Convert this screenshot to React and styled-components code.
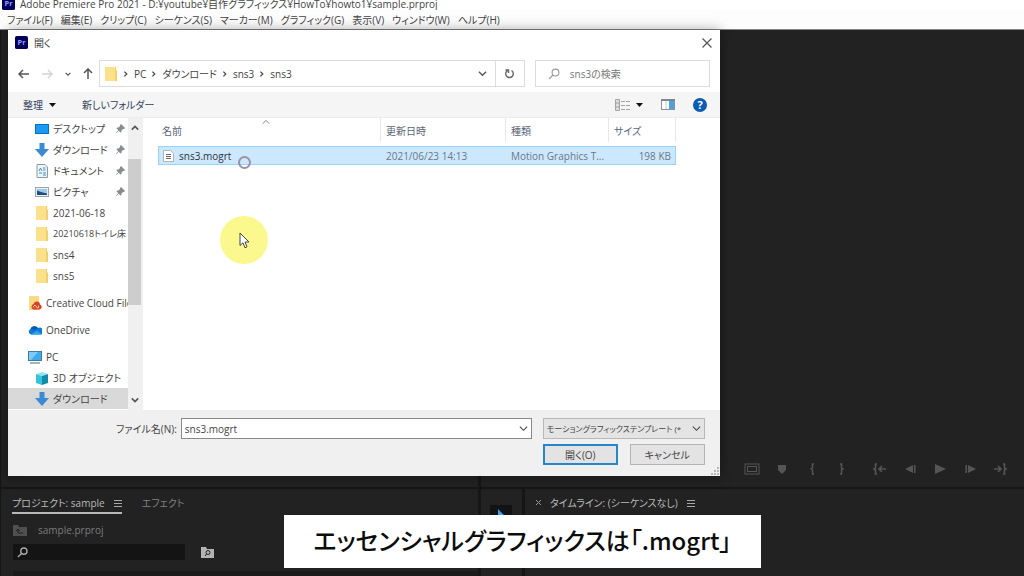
import React, { useState } from 'react'
import styled, { createGlobalStyle } from 'styled-components'

const uiFont = '"Open Sans", "Noto Sans CJK JP", sans-serif'
const panelDark = '#222222'
const seamDark = '#161616'
const dialogGrey = '#f0f0f0'

const GlobalStyle = createGlobalStyle`
  *, *::before, *::after{
    box-sizing: border-box;
  }
  body{
    margin: 0;
    background: ${seamDark};
    font-family: ${uiFont};
    font-size: 10px;
    font-feature-settings: "palt";
    overflow: hidden;
  }
  button, input, select{
    font: inherit;
    font-feature-settings: inherit;
    color: inherit;
    margin: 0;
    padding: 0;
    border: none;
    border-radius: 0;
    background: none;
    outline: none;
  }
  a{
    color: inherit;
    text-decoration: none;
  }
  svg{
    display: block;
    flex: none;
  }
`

const Container = styled.div`
  position: relative;
  display: flex;
  flex-direction: column;
  width: 100%;
  height: 100vh;
  overflow: hidden;
`

const TitleBar = styled.header`
  display: flex;
  align-items: center;
  gap: 5px;
  height: 10px;
  padding: 0 2px 4px;
  background: #fff;
  color: #444;
  white-space: nowrap;
`

const MenuBar = styled.nav`
  display: flex;
  align-items: center;
  gap: 8px;
  height: 20px;
  padding: 0 7px;
  background: #fdfdfd;
  border-bottom: 1px solid #808580;
  color: #444;
  white-space: nowrap;
`

const Workspace = styled.main`
  flex: 1;
  display: grid;
  grid-template-columns: 477px 41px 1fr;
  grid-template-rows: 1fr 87px;
  gap: 2px 3px;
  padding-left: 1px;
  min-height: 0;
`

const Panel = styled.section`
  background: ${panelDark};
  color: #a8a8a8;
  min-width: 0;
  overflow: hidden;
  ${ props => props.$wide && 'grid-column: span 2;' }
`

const MonitorPanel = styled(Panel)`
  display: flex;
  align-items: flex-end;
  justify-content: flex-end;
  gap: 8px;
  padding: 0 9px 8px;
`

const ControlGroup = styled.div`
  display: flex;
`

const ControlButton = styled.button`
  display: grid;
  place-items: center;
  width: 30px;
  height: 20px;
  color: #555;
`

const Tabs = styled.div`
  display: flex;
  align-items: center;
  gap: 20px;
  height: 27px;
  padding: 2px 11px 0;
  white-space: nowrap;
`

const Tab = styled.button`
  display: flex;
  align-items: center;
  gap: 9px;
  height: 21px;
  color: ${ props => props.$active ? '#b8b8b8' : '#808080' };
  border-bottom: 2px solid ${ props => props.$underline ? '#b8b8b8' : 'transparent' };
`

const ProjectPath = styled.div`
  display: flex;
  align-items: center;
  gap: 11px;
  height: 27px;
  padding: 0 12px;
  color: #7c7c7c;
`

const ProjectSearchRow = styled.div`
  display: flex;
  align-items: center;
  gap: 16px;
  height: 18px;
  padding: 0 12px;
`

const ProjectSearch = styled.label`
  display: flex;
  align-items: center;
  gap: 4px;
  width: 172px;
  height: 16px;
  padding: 0 4px;
  background: #141414;
  input{
    flex: 1;
    min-width: 0;
  }
`

const ProjectList = styled.div`
  height: 5px;
  margin: 10px 0 0 12px;
  background: #1a1a1a;
`

const ToolPanel = styled(Panel)`
  padding: 16px 9px;
`

const ToolButton = styled.button`
  display: grid;
  place-items: center;
  width: 22px;
  height: 22px;
  background: #131313;
`

const Dialog = styled.section`
  position: absolute;
  top: 30px;
  left: 8px;
  width: calc(70% - 5px);
  display: flex;
  flex-direction: column;
  background: #fff;
  color: #444;
  box-shadow: 0 0 12px rgba(0,0,0,0.35);
`

const DialogTitle = styled.div`
  display: flex;
  align-items: center;
  gap: 6px;
  height: 25px;
  padding: 0 8px 0 7px;
  h1{
    flex: 1;
    margin: 0;
    font-size: 10px;
    font-weight: 400;
  }
`

const IconButton = styled.button`
  display: grid;
  place-items: center;
  height: 20px;
  color: ${ props => props.$dim ? '#d4d4d4' : '#555' };
`

const NavRow = styled.div`
  display: flex;
  align-items: center;
  height: 37px;
  padding: 0 10px;
`

const NavButtons = styled.div`
  display: flex;
  align-items: center;
  justify-content: space-between;
  width: 76px;
  margin-right: 5px;
`

const AddressBar = styled.div`
  flex: 1;
  display: flex;
  align-items: center;
  height: 27px;
  border: 1px solid #dcdcdc;
`

const Crumbs = styled.div`
  flex: 1;
  display: flex;
  align-items: center;
  gap: 4px;
  padding-left: 4px;
  white-space: nowrap;
`

const Reload = styled.button`
  display: grid;
  place-items: center;
  align-self: stretch;
  width: 29px;
  margin-left: 8px;
  border-left: 1px solid #dcdcdc;
  color: #666;
`

const SearchBox = styled.label`
  display: flex;
  align-items: center;
  gap: 10px;
  width: 175px;
  height: 27px;
  margin-left: 10px;
  padding: 0 12px;
  border: 1px solid #dcdcdc;
  input{
    flex: 1;
    min-width: 0;
  }
  input::placeholder{
    color: #777;
    opacity: 1;
  }
`

const Toolbar = styled.div`
  display: flex;
  align-items: center;
  gap: 26px;
  height: 26px;
  padding: 0 13px 0 15px;
  background: #f5f5f5;
  border-bottom: 1px solid #ececec;
  color: #33415c;
`

const ToolbarItem = styled.button`
  display: flex;
  align-items: center;
  gap: 6px;
`

const ToolbarRight = styled.div`
  display: flex;
  align-items: center;
  gap: 18px;
  margin-left: auto;
`

const DialogBody = styled.div`
  display: flex;
  height: 292px;
`

const Sidebar = styled.nav`
  flex: 1;
  min-width: 0;
  overflow: hidden;
`

const SideGroup = styled.div`
  & + &{
    margin-top: 6px;
  }
`

const SideItem = styled.a`
  display: flex;
  align-items: center;
  gap: 4px;
  height: 21px;
  padding-left: ${ props => props.$nested ? 27 : 20 }px;
  background: ${ props => props.$selected ? '#d9d9d9' : 'transparent' };
  white-space: nowrap;
  font-size: ${ props => props.$small ? 9 : 10 }px;
  span{
    flex: 1;
    min-width: 0;
    overflow: hidden;
  }
`

const SideWrap = styled.div`
  display: flex;
  width: 135px;
`

const ScrollTrack = styled.div`
  display: flex;
  flex-direction: column;
  align-items: stretch;
  width: 15px;
  padding-right: 2px;
  background: ${dialogGrey};
`

const ScrollThumb = styled.div`
  height: 146px;
  margin: 21px 0 auto;
  background: #cdcdcd;
`

const FileArea = styled.div`
  flex: 1;
  padding-left: 15px;
`

const FileTable = styled.table`
  width: 518px;
  table-layout: fixed;
  border-collapse: separate;
  border-spacing: 0;
  th, td{
    padding: 0 5px;
    font-weight: 400;
    text-align: left;
    white-space: nowrap;
  }
  th{
    position: relative;
    height: 24px;
    color: #5a6578;
    border-right: 1px solid #e8e8e8;
  }
  th:first-child, td:first-child{
    padding-left: 4px;
  }
`

const SortMark = styled.span`
  position: absolute;
  top: 0;
  left: 47%;
  color: #777;
`

const FileRow = styled.tr`
  td{
    height: 19px;
    background: #cce8ff;
    border: 1px solid #99d1ff;
    border-width: 1px 0;
    color: #6c7784;
  }
  td:first-child{
    border-left-width: 1px;
    color: #333;
  }
  td:last-child{
    border-right-width: 1px;
    padding-right: 4px;
    text-align: right;
  }
`

const FileName = styled.div`
  display: flex;
  align-items: center;
  gap: 5px;
  line-height: 16px;
`

const Footer = styled.form`
  display: grid;
  grid-template-columns: 1fr 351px 162px;
  gap: 5px 11px;
  align-items: center;
  padding: 8px 15px 11px 0;
  background: ${dialogGrey};
  .fileLabel{
    margin-right: -7px;
    text-align: right;
  }
`

const Combo = styled.div`
  display: flex;
  align-items: center;
  height: 21px;
  padding: 0 3px;
  background: #fff;
  border: 1px solid #8a8a8a;
  input{
    flex: 1;
    min-width: 0;
  }
`

const TypeSelect = styled.div`
  display: flex;
  align-items: center;
  gap: 2px;
  height: 21px;
  padding: 0 3px;
  background: #e4e4e4;
  border: 1px solid #b8b8b8;
  select{
    flex: 1;
    min-width: 0;
    appearance: none;
    font-size: 8px;
  }
`

const Actions = styled.div`
  grid-column: 3;
  display: grid;
  grid-template-columns: 1fr 1fr;
  gap: 12px;
`

const ActionButton = styled.button`
  height: 21px;
  background: #e3e3e3;
  border: ${ props => props.$primary ? '2px solid #2a84c8' : '1px solid #b4b4b4' };
`

const Grip = styled.div`
  position: absolute;
  right: 1px;
  bottom: 1px;
`

const BusyRing = styled.div`
  position: absolute;
  top: 156px;
  left: 238px;
  width: 13px;
  height: 13px;
  border: 2px solid #9a92a4;
  border-radius: 50%;
`

const Pointer = styled.div`
  position: absolute;
  top: 216px;
  left: 220px;
  display: grid;
  place-items: center;
  width: 48px;
  height: 48px;
  border-radius: 50%;
  background: #fbf88e;
`

const Caption = styled.p`
  position: absolute;
  left: 284px;
  bottom: 8px;
  margin: 0;
  width: 477px;
  height: 53px;
  background: #fff;
  color: #0c0c0c;
  font-family: "Noto Sans CJK JP", sans-serif;
  font-size: 24px;
  font-weight: 500;
  line-height: 50px;
  text-align: center;
  white-space: nowrap;
`

const PrLogo = ({ size }) => (
  <svg width={size} height={size} viewBox="0 0 14 14">
    <rect width="14" height="14" rx="2" fill="#00005b" />
    <text x="7" y="10" textAnchor="middle" fontFamily="Open Sans, sans-serif" fontSize="8" fontWeight="700" fill="#9a9aff">Pr</text>
  </svg>
)

const Chevron = ({ dir = 'down', size = 9, width = 1.4 }) => {
  const d = {
    down: 'M1 3l4 4 4-4',
    up: 'M1 7l4-4 4 4',
    right: 'M3 2l3 3-3 3',
  }
  return (
    <svg width={size} height={size} viewBox="0 0 10 10" fill="none" stroke="currentColor" strokeWidth={width}>
      <path d={d[dir]} />
    </svg>
  )
}

const Arrow = ({ dir }) => {
  const d = {
    left: 'M11 6H1M5 2L1 6l4 4',
    right: 'M1 6h10M7 2l4 4-4 4',
    up: 'M6 11V1M2 5l4-4 4 4',
  }
  return (
    <svg width="12" height="12" viewBox="0 0 12 12" fill="none" stroke="currentColor" strokeWidth="1.5">
      <path d={d[dir]} />
    </svg>
  )
}

const Magnifier = ({ size = 12, color = '#999', width = 1.1 }) => (
  <svg width={size} height={size} viewBox="0 0 12 12" fill="none" stroke={color} strokeWidth={width}>
    <circle cx="7.5" cy="4.5" r="3.4" />
    <path d="M5 7L1 11" />
  </svg>
)

const Triangle = () => (
  <svg width="7" height="4" viewBox="0 0 7 4"><path d="M0 0h7L3.500 4z" fill="#111" /></svg>
)

const Burger = () => (
  <svg width="8" height="8" viewBox="0 0 8 8" stroke="#a8a8a8"><path d="M0 1.500h8M0 4.500h8M0 7.500h8" /></svg>
)

const Pin = () => (
  <svg width="12" height="9" viewBox="0 0 12 9">
    <path d="M5 0l4 4-1 1h-1L5.500 6.500V8l-1 .5L2.700 6.700.5 9 0 8.500l2.300-2.200L.5 4.500l.5-1h1.500L4 2V1z" fill="#868c90" />
  </svg>
)

// sidebar icons, all on a 14px box
const icons = {
  desktop: (
    <>
      <rect x="0" y="2" width="14" height="10" fill="#0a6fc2" />
      <rect x="1" y="3" width="12" height="8" fill="#1a9af5" />
    </>
  ),
  download: <path d="M4.500 0h5v6H14l-7 8-7-8h4.500z" fill="#3b8ad4" />,
  document: (
    <>
      <path d="M2 .5h8l2.500 2.500v10.500H2z" fill="#eef5fa" stroke="#8d9aa5" />
      <path d="M4 7l1.500-3L7 7M8 4h2.500M8 6h2.500M4 9h3M8 11h3M8 9h3" stroke="#3d93c7" fill="none" />
    </>
  ),
  picture: (
    <>
      <rect x=".5" y="2.500" width="13" height="9" fill="#e8f1f8" stroke="#9aa5ad" />
      <rect x="2" y="4" width="10" height="6" fill="#9fc9e8" />
      <path d="M2 5.500l4 1.500 6 1.500V10H2z" fill="#234f77" />
    </>
  ),
  folder: (
    <>
      <path d="M1 0h11v3l1 1v10H1z" fill="#f0d069" />
      <path d="M1 0h10v14H1z" fill="#fbe18b" />
    </>
  ),
  creative: (
    <>
      <path d="M1 0h10v14H1z" fill="#f8dc84" />
      <path d="M5 13.500a3 3 0 01.5-5.500A3.300 3.300 0 0112 8.500a2.600 2.600 0 01-.5 5z" fill="#d9401f" />
      <path d="M6 11.500a1.200 1.200 0 112-1l1.500 1.300a1 1 0 10.500-2" stroke="#fff" strokeWidth=".8" fill="none" />
    </>
  ),
  cloud: (
    <>
      <path d="M3 11.500A3 3 0 012.500 6 4.300 4.300 0 0110 5a3.300 3.300 0 013 6.500z" fill="#0f78d4" />
      <path d="M3 11.500l6-4 4.500 3.500-.5.5z" fill="#28a8ea" />
      <path d="M2.500 6A4.300 4.300 0 0110 5L7 7z" fill="#0a58b0" />
    </>
  ),
  pc: (
    <>
      <rect x=".5" y="1.500" width="13" height="9" fill="#3fa9ee" stroke="#447a9e" />
      <path d="M1 2h9L3 10H1z" fill="#7ccaf7" />
      <path d="M2 13h10" stroke="#8e9aa3" strokeWidth="1.500" />
    </>
  ),
  cube: (
    <>
      <path d="M1 3l6-2 6 2-6 2z" fill="#8ce6f2" />
      <path d="M1 3l6 2v9l-6-2z" fill="#35c3dc" />
      <path d="M13 3L7 5v9l6-2z" fill="#128aa8" />
    </>
  ),
}

const Icon = ({ name }) => (
  <svg width="14" height="14" viewBox="0 0 14 14">{icons[name]}</svg>
)

const sideGroups = [
  [
    { icon: 'desktop', text: 'デスクトップ', pin: true, nested: true },
    { icon: 'download', text: 'ダウンロード', pin: true, nested: true },
    { icon: 'document', text: 'ドキュメント', pin: true, nested: true },
    { icon: 'picture', text: 'ピクチャ', pin: true, nested: true },
    { icon: 'folder', text: '2021-06-18', nested: true },
    { icon: 'folder', text: '20210618トイレ床', small: true, nested: true },
    { icon: 'folder', text: 'sns4', nested: true },
    { icon: 'folder', text: 'sns5', nested: true },
  ],
  [{ icon: 'creative', text: 'Creative Cloud Files' }],
  [{ icon: 'cloud', text: 'OneDrive' }],
  [
    { icon: 'pc', text: 'PC' },
    { icon: 'cube', text: '3D オブジェクト', nested: true },
    { icon: 'download', text: 'ダウンロード', nested: true, selected: true },
  ],
]

const menus = [
  'ファイル(F)', '編集(E)', 'クリップ(C)', 'シーケンス(S)', 'マーカー(M)',
  'グラフィック(G)', '表示(V)', 'ウィンドウ(W)', 'ヘルプ(H)',
]

const crumbs = ['PC', 'ダウンロード', 'sns3', 'sns3']

const controls = [
  [
    ['セーフマージン', <><rect x="1" y="3" width="14" height="10" fill="none" stroke="currentColor" /><rect x="3.500" y="5.500" width="9" height="5" fill="none" stroke="currentColor" /></>],
    ['マーカーを追加', <path d="M4 4h8v5l-4 4-4-4z" fill="currentColor" />],
    ['インをマーク', <path d="M10 3H8.500v4L7 8l1.500 1v4H10" fill="none" stroke="currentColor" strokeWidth="1.500" />],
    ['アウトをマーク', <path d="M6 3h1.500v4L9 8 7.500 9v4H6" fill="none" stroke="currentColor" strokeWidth="1.500" />],
  ],
  [
    ['インへ移動', <path d="M5 3H3.500v4L2 8l1.500 1v4H5M14 8H7M10 5L7 8l3 3" fill="none" stroke="currentColor" strokeWidth="1.600" />],
    ['1フレーム前へ', <path d="M11 4v8L3 8zM12 4h1.500v8H12z" fill="currentColor" />],
    ['再生', <path d="M3 3l11 5-11 5z" fill="currentColor" />],
    ['1フレーム先へ', <path d="M6 4v8l8-4zM3.500 4H5v8H3.500z" fill="currentColor" />],
    ['アウトへ移動', <path d="M11 3h1.500v4L14 8l-1.500 1v4H11M2 8h7M6 5l3 3-3 3" fill="none" stroke="currentColor" strokeWidth="1.600" />],
  ],
]

const App = () => {

  const [fileName, setFileName] = useState('sns3.mogrt')
  const [query, setQuery] = useState('')

  return (
    <Container>
      <GlobalStyle />

      <TitleBar>
        <PrLogo size={13} />
        <span>Adobe Premiere Pro 2021 - D:¥youtube¥自作グラフィックス¥HowTo¥howto1¥sample.prproj</span>
      </TitleBar>

      <MenuBar>
        {menus.map(m => <a href="#menu" key={m}>{m}</a>)}
      </MenuBar>

      <Workspace>
        <Panel />
        <MonitorPanel $wide>
          {controls.map((group, i) => (
            <ControlGroup key={i}>
              {group.map(([label, shape]) => (
                <ControlButton key={label} aria-label={label}>
                  <svg width="16" height="16" viewBox="0 0 16 16">{shape}</svg>
                </ControlButton>
              ))}
            </ControlGroup>
          ))}
        </MonitorPanel>

        <Panel>
          <Tabs>
            <Tab $active $underline>プロジェクト: sample <Burger /></Tab>
            <Tab>エフェクト</Tab>
          </Tabs>
          <ProjectPath>
            <svg width="14" height="12" viewBox="0 0 14 12">
              <path d="M0 1h5l1 2h8v9H0z" fill="#505050" />
              <path d="M10 9H5V6M3 7l2-2 2 2" stroke="#222" fill="none" />
            </svg>
            <span>sample.prproj</span>
          </ProjectPath>
          <ProjectSearchRow>
            <ProjectSearch>
              <Magnifier size={11} color="#a8a8a8" width={1.5} />
              <input aria-label="プロジェクトを検索" />
            </ProjectSearch>
            <svg width="13" height="11" viewBox="0 0 13 11">
              <path d="M0 0h5l1 2h7v9H0z" fill="#b4b4b4" />
              <circle cx="7" cy="5.500" r="2" fill="none" stroke="#222" />
              <path d="M5.500 7L4 9" stroke="#222" />
            </svg>
          </ProjectSearchRow>
          <ProjectList />
        </Panel>
        <ToolPanel>
          <ToolButton aria-label="選択ツール">
            <svg width="12" height="14" viewBox="0 0 12 14"><path d="M3 0l9 9H7l-4 4z" fill="#3b9cf0" /></svg>
          </ToolButton>
        </ToolPanel>
        <Panel>
          <Tabs>
            <Tab $active>
              <svg width="5" height="5" viewBox="0 0 5 5" stroke="#999"><path d="M0 0l5 5M5 0L0 5" /></svg>
              タイムライン: (シーケンスなし) <Burger />
            </Tab>
          </Tabs>
        </Panel>
      </Workspace>

      <Dialog role="dialog" aria-label="開く">
        <DialogTitle>
          <PrLogo size={13} />
          <h1>開く</h1>
          <IconButton aria-label="閉じる">
            <svg width="10" height="10" viewBox="0 0 10 10" stroke="#555" strokeWidth="1.200"><path d="M.5.5l9 9M9.500.5l-9 9" /></svg>
          </IconButton>
        </DialogTitle>

        <NavRow>
          <NavButtons>
            <IconButton aria-label="戻る"><Arrow dir="left" /></IconButton>
            <IconButton $dim aria-label="進む"><Arrow dir="right" /></IconButton>
            <IconButton aria-label="最近表示した場所"><Chevron size={6} width={2} /></IconButton>
            <IconButton aria-label="上へ"><Arrow dir="up" /></IconButton>
          </NavButtons>
          <AddressBar>
            <Crumbs>
              <Icon name="folder" />
              {crumbs.map((c, i) => (
                <React.Fragment key={i}>
                  <Chevron dir="right" size={8} width={1.5} />
                  <a href="#crumb">{c}</a>
                </React.Fragment>
              ))}
            </Crumbs>
            <IconButton aria-label="以前の場所"><Chevron /></IconButton>
            <Reload aria-label="更新">
              <svg width="11" height="11" viewBox="0 0 11 11" fill="none" stroke="currentColor" strokeWidth="1.400">
                <path d="M7.500 2.500A3.800 3.800 0 113.500 2.500M1.500 2h3v3" />
              </svg>
            </Reload>
          </AddressBar>
          <SearchBox>
            <Magnifier />
            <input aria-label="検索" placeholder="sns3の検索" value={query} onChange={e => setQuery(e.target.value)} />
          </SearchBox>
        </NavRow>

        <Toolbar>
          <ToolbarItem>整理 <Triangle /></ToolbarItem>
          <ToolbarItem>新しいフォルダー</ToolbarItem>
          <ToolbarRight>
            <ToolbarItem aria-label="表示方法">
              <svg width="15" height="12" viewBox="0 0 15 12" stroke="#a4a4a4">
                <path d="M.5.5h4v11h-4zM.5 4h4M.5 8h4" fill="#ddd" />
                <path d="M6 2.500h4M11 2.500h4M6 6.500h4M11 6.500h4M6 10.500h4M11 10.500h4" />
              </svg>
              <Triangle />
            </ToolbarItem>
            <ToolbarItem aria-label="プレビュー">
              <svg width="14" height="11" viewBox="0 0 14 11">
                <rect x=".5" y=".5" width="13" height="10" fill="#fff" stroke="#8894a0" />
                <path d="M0 0h14v2H0z" fill="#7d8791" />
                <path d="M8 2h5v8H8z" fill="#4ba3dc" />
                <path d="M5 2v8" stroke="#c2ccd4" />
              </svg>
            </ToolbarItem>
            <ToolbarItem aria-label="ヘルプ">
              <svg width="14" height="14" viewBox="0 0 14 14">
                <circle cx="7" cy="7" r="7" fill="#0a5db3" />
                <text x="7" y="11" textAnchor="middle" fontFamily="Open Sans, sans-serif" fontSize="11" fontWeight="700" fill="#fff">?</text>
              </svg>
            </ToolbarItem>
          </ToolbarRight>
        </Toolbar>

        <DialogBody>
          <SideWrap>
            <Sidebar>
              {sideGroups.map((group, g) => (
                <SideGroup key={g}>
                  {group.map(item => (
                    <SideItem
                      href="#place"
                      key={item.text}
                      $nested={item.nested}
                      $small={item.small}
                      $selected={item.selected}
                    >
                      <Icon name={item.icon} />
                      <span>{item.text}</span>
                      {item.pin && <Pin />}
                    </SideItem>
                  ))}
                </SideGroup>
              ))}
            </Sidebar>
            <ScrollTrack>
              <IconButton aria-label="上へスクロール"><Chevron dir="up" size={8} width={2} /></IconButton>
              <ScrollThumb />
              <IconButton aria-label="下へスクロール"><Chevron size={8} width={2} /></IconButton>
            </ScrollTrack>
          </SideWrap>

          <FileArea>
            <FileTable>
              <colgroup>
                <col width="223" />
                <col width="125" />
                <col width="103" />
                <col width="67" />
              </colgroup>
              <thead>
                <tr>
                  <th>名前<SortMark><Chevron dir="up" size={8} width={1.2} /></SortMark></th>
                  <th>更新日時</th>
                  <th>種類</th>
                  <th>サイズ</th>
                </tr>
              </thead>
              <tbody>
                <tr aria-hidden="true"><td height="4" colSpan="4" /></tr>
                <FileRow>
                  <td>
                    <FileName>
                      <svg width="11" height="12" viewBox="0 0 11 12">
                        <path d="M.5.5h7l3 3v8H.5z" fill="#fff" stroke="#b0b4b8" />
                        <path d="M3 4.500h5M3 6.500h5M3 8.500h5" stroke="#666" />
                      </svg>
                      sns3.mogrt
                    </FileName>
                  </td>
                  <td>2021/06/23 14:13</td>
                  <td>Motion Graphics T...</td>
                  <td>198 KB</td>
                </FileRow>
              </tbody>
            </FileTable>
          </FileArea>
        </DialogBody>

        <Footer onSubmit={e => e.preventDefault()}>
          <label className="fileLabel" htmlFor="fileName">ファイル名(N):</label>
          <Combo>
            <input id="fileName" value={fileName} onChange={e => setFileName(e.target.value)} />
            <Chevron width={1.2} />
          </Combo>
          <TypeSelect>
            <select aria-label="ファイルの種類">
              <option>モーショングラフィックステンプレート (*</option>
            </select>
            <Chevron width={1.2} />
          </TypeSelect>
          <Actions>
            <ActionButton $primary>開く(O)</ActionButton>
            <ActionButton type="button">キャンセル</ActionButton>
          </Actions>
        </Footer>
        <Grip>
          <svg width="8" height="8" viewBox="0 0 8 8" fill="#b8b8b8">
            <path d="M6 0h2v2H6zM3 3h2v2H3zM6 3h2v2H6zM0 6h2v2H0zM3 6h2v2H3zM6 6h2v2H6z" />
          </svg>
        </Grip>
      </Dialog>

      <BusyRing />
      <Pointer>
        <svg width="11" height="17" viewBox="0 0 11 17">
          <path d="M1 1v12.500l3-2.700 2 5 2-.9-2-4.900h4z" fill="#fff" stroke="#444" />
        </svg>
      </Pointer>
      <Caption>エッセンシャルグラフィックスは「.mogrt」</Caption>
    </Container>
  )
}
export default App
